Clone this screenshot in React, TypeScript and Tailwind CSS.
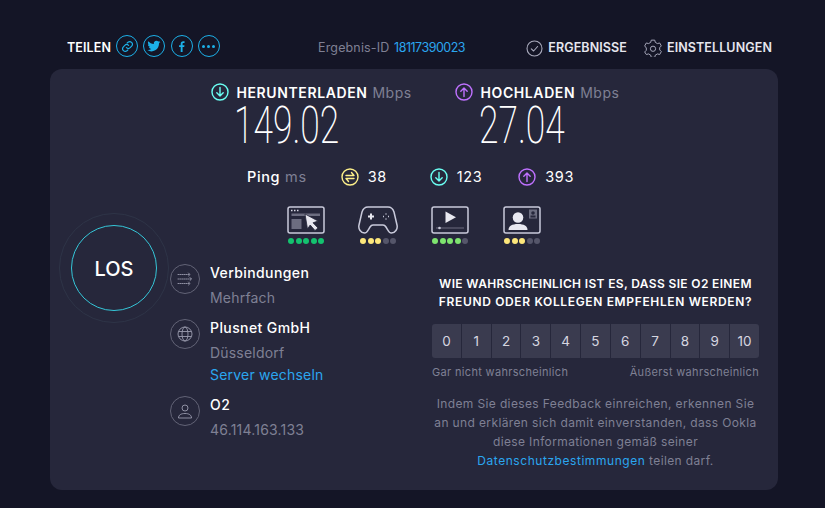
const ArrowCircle = ({ up, color }: { up?: boolean; color: string }) => (
  <svg width="18" height="18" viewBox="0 0 18 18" fill="none" stroke={color} strokeWidth="1.4" strokeLinecap="round" strokeLinejoin="round">
    <circle cx="9" cy="9" r="8" />
    {up ? <path d="M9 13.5V5M5.8 8.2 9 5l3.2 3.2" /> : <path d="M9 4.5V13M5.8 9.8 9 13l3.2-3.2" />}
  </svg>
);

const PingIcon = () => (
  <svg width="18" height="18" viewBox="0 0 18 18" fill="none" stroke="#fdf08a" strokeWidth="1.4" strokeLinecap="round" strokeLinejoin="round">
    <circle cx="9" cy="9" r="8" />
    <path d="M5 7.5h8L10.5 4.5M13 10.5H5L7.5 13.5" />
  </svg>
);

const ShareButton = ({ children }: { children: React.ReactNode }) => (
  <div className="w-[22px] h-[22px] rounded-full border-[1.5px] border-[#1cb0e8] flex items-center justify-center">
    {children}
  </div>
);

const BrowsingIcon = () => (
  <svg width="38" height="28" viewBox="0 0 38 28" fill="none">
    <rect x="1" y="1" width="36" height="26" rx="2" stroke="#c9cadb" strokeWidth="1.5" />
    <path d="M4 4.5h1.500M7 4.500h1.500M10 4.500h1.500" stroke="#d8d8e4" strokeWidth="1.5" />
    <rect x="4.5" y="7.500" width="28.500" height="2.500" fill="#6c6d80" />
    <rect x="4.5" y="13" width="10" height="10" fill="#6c6d80" />
    <path d="M18 8 31 15l-5 1.800 5 5.200-3 2.500-4.800-5.500-2.700 4z" fill="#e8e8f0" stroke="#26273b" strokeWidth="0.8" />
  </svg>
);

const GamingIcon = () => (
  <svg width="40" height="28" viewBox="0 0 40 28" fill="none">
    <path d="M10 1h20c3 0 5 2 6 5l3 13c1 4-2 8-5.500 8-2 0-3-1.500-4-3.500l-1.500-2.500c-.8-1.300-1.500-2-3-2H15c-1.500 0-2.200.7-3 2l-1.500 2.500c-1 2-2 3.500-4 3.500C3 27 0 23 1 19L4 6c1-3 3-5 6-5z" stroke="#c9cadb" strokeWidth="1.5" />
    <path d="M13 7.500v6M10 10.500h6" stroke="#e8e8f0" strokeWidth="2" />
    <path d="M28 7.500v1M28 12.500v1M25 10.500h1M30 10.500h1" stroke="#c9cadb" strokeWidth="1.500" />
  </svg>
);

const StreamingIcon = () => (
  <svg width="38" height="28" viewBox="0 0 38 28" fill="none">
    <rect x="1" y="1" width="36" height="26" rx="2" stroke="#c9cadb" strokeWidth="1.5" />
    <path d="M14.500 5.500v11.500l10.500-5.750z" fill="#e8e8f0" />
    <path d="M5 22h28" stroke="#6c6d80" strokeWidth="1" />
    <circle cx="8.500" cy="22" r="1.300" fill="#c9cadb" />
  </svg>
);

const VideoChatIcon = () => (
  <svg width="38" height="28" viewBox="0 0 38 28" fill="none">
    <rect x="1" y="1" width="36" height="26" rx="2" stroke="#c9cadb" strokeWidth="1.5" />
    <circle cx="15" cy="11.500" r="5.300" fill="#e8e8f0" />
    <path d="M5.500 24c0-4 3.500-6 9.500-6s9.500 2 9.500 6z" fill="#e8e8f0" />
    <rect x="26" y="3.500" width="8" height="9" fill="#6c6d80" />
    <circle cx="30" cy="7" r="1.800" fill="#26273b" />
    <rect x="27.500" y="9.500" width="5" height="2" fill="#26273b" />
  </svg>
);

const Dots = ({ on, color }: { on: number; color: string }) => (
  <div className="flex gap-[1.5px] justify-center mt-[4px]">
    {[0, 1, 2, 3, 4].map((i) => (
      <span
        key={i}
        className="w-[6px] h-[6px] rounded-full"
        style={{ backgroundColor: i < on ? color : "#55566a" }}
      />
    ))}
  </div>
);

const InfoRow = ({ icon, title, sub, link }: { icon: React.ReactNode; title: string; sub: string; link?: string }) => (
  <div className="flex gap-[10px]">
    <div className="w-[30px] h-[30px] rounded-full border border-[#626376] flex items-center justify-center shrink-0 mt-[1px]">
      {icon}
    </div>
    <div>
      <div className="text-[14px] leading-[20px] font-medium tracking-[0.4px] text-white">{title}</div>
      <div className="text-[14px] leading-[20px] tracking-[0.2px] text-[#7f8094] mt-[5px]">{sub}</div>
      {link && <div className="text-[14px] leading-[20px] tracking-[0.2px] text-[#2ba6ef] mt-[2px]">{link}</div>}
    </div>
  </div>
);

export default function App() {
  const scale = ["0", "1", "2", "3", "4", "5", "6", "7", "8", "9", "10"];

  return (
    <div className="w-[825px] h-[508px] bg-[#141526] overflow-hidden font-['Inter',sans-serif] pl-[50px] pr-[47px] pt-[33px]">
      {/* header */}
      <div className="h-[36px] flex items-center pl-[17px] pr-[6px] pb-[6px]">
        <div className="flex items-center w-[240px]">
          <span className="text-[12.5px] font-semibold tracking-[0.1px] text-white mr-[5px]">TEILEN</span>
          <div className="flex gap-[5.3px] mb-[4px]">
            <ShareButton>
              <svg width="13" height="13" viewBox="0 0 24 24" fill="none" stroke="#1cb0e8" strokeWidth="2.2" strokeLinecap="round">
                <path d="M10 14a5 5 0 0 0 7 0l3-3a5 5 0 0 0-7-7l-1.500 1.500" />
                <path d="M14 10a5 5 0 0 0-7 0l-3 3a5 5 0 0 0 7 7l1.500-1.500" />
              </svg>
            </ShareButton>
            <ShareButton>
              <svg width="14" height="14" viewBox="0 0 24 24" fill="#1cb0e8">
                <path d="M23 5c-.8.4-1.700.6-2.600.7.900-.6 1.600-1.400 2-2.500-.9.500-1.900.9-2.900 1.100A4.600 4.600 0 0 0 11.700 8.500C7.900 8.300 4.500 6.500 2.200 3.700c-1.200 2.100-.6 4.800 1.400 6.100-.7 0-1.400-.2-2-.6 0 2.200 1.500 4.100 3.600 4.600-.7.200-1.400.2-2.100.1.600 1.900 2.300 3.200 4.300 3.200A9.300 9.300 0 0 1 .6 19a13 13 0 0 0 20-11.600c.9-.6 1.700-1.400 2.400-2.400z" />
              </svg>
            </ShareButton>
            <ShareButton>
              <svg width="13" height="13" viewBox="0 0 24 24" fill="#1cb0e8">
                <path d="M14 22v-9h3l.5-3.500H14V7.300c0-1 .3-1.700 1.700-1.700h1.900V2.400C17.200 2.300 16.200 2.200 15 2.200c-2.700 0-4.500 1.600-4.500 4.600v2.700h-3V13h3v9z" />
              </svg>
            </ShareButton>
            <ShareButton>
              <div className="flex gap-[2px]">
                <span className="w-[3px] h-[3px] rounded-full bg-[#1cb0e8]" />
                <span className="w-[3px] h-[3px] rounded-full bg-[#1cb0e8]" />
                <span className="w-[3px] h-[3px] rounded-full bg-[#1cb0e8]" />
              </div>
            </ShareButton>
          </div>
        </div>
        <div className="text-[12.5px] tracking-[0.15px] text-[#7f8094] ml-[11px]">
          Ergebnis-ID <span className="text-[#2ba6ef] tracking-[-0.5px] ml-[1px]">18117390023</span>
        </div>
        <div className="ml-auto flex items-center gap-[17px] text-[12.5px] font-semibold tracking-[0.1px] text-[#e6e6ee]">
          <div className="flex items-center gap-[5px]">
            <svg width="17" height="17" viewBox="0 0 17 17" fill="none" stroke="#a9aabc" strokeWidth="1.1" strokeLinecap="round" strokeLinejoin="round">
              <circle cx="8.500" cy="8.500" r="7.500" />
              <path d="m5.300 8.800 2.300 2.200 4-4.500" />
            </svg>
            ERGEBNISSE
          </div>
          <div className="flex items-center gap-[5px]">
            <svg width="18" height="18" viewBox="0 0 24 24" fill="none" stroke="#a9aabc" strokeWidth="1.300" strokeLinejoin="round">
              <path d="M9.700 1.500h4.600l.8 3 2.800 1.600 3-.8 2.200 3.900-2.200 2.300v3l2.200 2.300-2.200 3.900-3-.8-2.800 1.600-.8 3H9.700l-.8-3-2.800-1.600-3 .8L.9 17.300 3.100 15v-3L.9 9.200l2.200-3.900 3 .8 2.800-1.600z" />
              <circle cx="12" cy="13" r="3.500" />
            </svg>
            EINSTELLUNGEN
          </div>
        </div>
      </div>

      {/* main panel */}
      <div className="h-[421px] bg-[#26273b] rounded-[12px] flex">
        {/* start button column */}
        <div className="w-[120px] shrink-0 pt-[144px] pl-[9px]">
          <div className="w-[110px] h-[110px] rounded-full border border-[#2e3447] flex items-center justify-center">
            <div className="w-[86px] h-[86px] rounded-full border border-[#35c6d8] flex items-center justify-center pt-[2px] text-[20px] font-medium text-white">
              LOS
            </div>
          </div>
        </div>

        <div className="flex-1 min-w-0">
          {/* metrics */}
          <div className="w-[490px] flex flex-col items-center pt-[13px]">
            <div className="flex">
              <div className="w-[244px]">
                <div className="flex items-center gap-[8px] h-[20px] whitespace-nowrap">
                  <ArrowCircle color="#6afff3" />
                  <span className="text-[14px] font-semibold tracking-[0.6px] text-white">HERUNTERLADEN</span>
                  <span className="text-[14px] tracking-[0.5px] text-[#7f8094] -ml-[3px]">Mbps</span>
                </div>
                <div className="h-[47px] pl-[23px]">
                  <span className="text-[52px] leading-[47px] font-['Roboto',sans-serif] font-extralight text-white origin-left scale-x-[0.68] inline-block">149.02</span>
                </div>
              </div>
              <div className="w-[165px]">
                <div className="flex items-center gap-[8px] h-[20px] whitespace-nowrap">
                  <ArrowCircle up color="#bf71ff" />
                  <span className="text-[14px] font-semibold tracking-[0.6px] text-white">HOCHLADEN</span>
                  <span className="text-[14px] tracking-[0.5px] text-[#7f8094] -ml-[3px]">Mbps</span>
                </div>
                <div className="h-[47px] pl-[24px]">
                  <span className="text-[52px] leading-[47px] font-['Roboto',sans-serif] font-extralight text-white origin-left scale-x-[0.68] inline-block">27.04</span>
                </div>
              </div>
            </div>

            <div className="flex items-center mt-[18px] mr-[9px] h-[20px] text-[14.5px] tracking-[0.6px] text-white whitespace-nowrap">
              <span className="font-medium">Ping</span>
              <span className="text-[#7f8094] ml-[5px]">ms</span>
              <span className="ml-[34px]"><PingIcon /></span>
              <span className="ml-[9px]">38</span>
              <span className="ml-[43px]"><ArrowCircle color="#6afff3" /></span>
              <span className="ml-[9px]">123</span>
              <span className="ml-[36px]"><ArrowCircle up color="#bf71ff" /></span>
              <span className="ml-[9px]">393</span>
            </div>

            <div className="flex gap-[26px] mt-[19px] mr-[2px]">
              <div className="w-[46px] flex flex-col items-center">
                <BrowsingIcon />
                <Dots on={5} color="#14c26f" />
              </div>
              <div className="w-[46px] flex flex-col items-center">
                <GamingIcon />
                <Dots on={3} color="#fde77b" />
              </div>
              <div className="w-[46px] flex flex-col items-center">
                <StreamingIcon />
                <Dots on={4} color="#7ee46f" />
              </div>
              <div className="w-[46px] flex flex-col items-center">
                <VideoChatIcon />
                <Dots on={3} color="#fde77b" />
              </div>
            </div>
          </div>

          <div className="flex mt-[19px]">
            {/* connection info */}
            <div className="w-[262px] shrink-0 flex flex-col gap-[10px]">
              <InfoRow
                title="Verbindungen"
                sub="Mehrfach"
                icon={
                  <svg width="16" height="16" viewBox="0 0 16 16" fill="none" stroke="#9a9bae" strokeWidth="0.9" strokeLinecap="round" strokeLinejoin="round">
                    <path d="M1 3.500h12M1 8h13.500M1 12.500h12" strokeDasharray="1 1" />
                    <path d="M11.500 2 13 3.500 11.500 5M13 6.500 14.500 8 13 9.500M11.500 11l1.500 1.500-1.500 1.500" />
                  </svg>
                }
              />
              <InfoRow
                title="Plusnet GmbH"
                sub="Düsseldorf"
                link="Server wechseln"
                icon={
                  <svg width="16" height="16" viewBox="0 0 16 16" fill="none" stroke="#9a9bae" strokeWidth="0.9">
                    <circle cx="8" cy="8" r="7" />
                    <ellipse cx="8" cy="8" rx="3" ry="7" />
                    <path d="M1.500 5.500h13M1.500 10.500h13" />
                  </svg>
                }
              />
              <InfoRow
                title="O2"
                sub="46.114.163.133"
                icon={
                  <svg width="16" height="16" viewBox="0 0 16 16" fill="none" stroke="#9a9bae" strokeWidth="0.9">
                    <circle cx="8" cy="5" r="3" />
                    <path d="M1.500 15c0-3 2.500-4.500 6.500-4.500s6.500 1.500 6.500 4.500z" />
                  </svg>
                }
              />
            </div>

            {/* feedback */}
            <div className="w-[327px] shrink-0 pt-[12px]">
              <div className="text-[12px] leading-[18px] font-semibold tracking-[0.35px] text-white text-center whitespace-nowrap">
                <div>WIE WAHRSCHEINLICH IST ES, DASS SIE O2 EINEM</div>
                <div className="tracking-[0.65px]">FREUND ODER KOLLEGEN EMPFEHLEN WERDEN?</div>
              </div>
              <div className="flex gap-[1px] mt-[13px] rounded-[3px] overflow-hidden">
                {scale.map((n) => (
                  <div key={n} className="flex-1 h-[34px] bg-[#3a3b4f] flex items-center justify-center text-[13.5px] text-[#d6d6e0]">
                    {n}
                  </div>
                ))}
              </div>
              <div className="flex justify-between mt-[6px] text-[11px] leading-[16px] tracking-[0.33px] text-[#7f8094] whitespace-nowrap">
                <span>Gar nicht wahrscheinlich</span>
                <span>Äußerst wahrscheinlich</span>
              </div>
              <div className="mt-[14px] text-[12px] leading-[19px] tracking-[0.37px] text-[#7f8094] text-center whitespace-nowrap">
                Indem Sie dieses Feedback einreichen, erkennen Sie
                <br />
                an und erklären sich damit einverstanden, dass Ookla
                <br />
                diese Informationen gemäß seiner
                <br />
                <span className="text-[#2ba6ef] tracking-[0.55px]">Datenschutzbestimmungen</span> teilen darf.
              </div>
            </div>
          </div>
        </div>
      </div>
    </div>
  );
}
